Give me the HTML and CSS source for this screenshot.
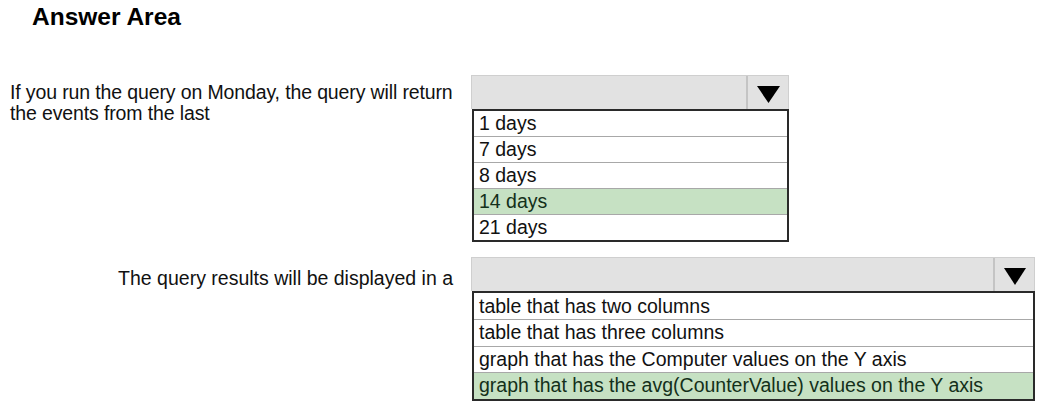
FILE: index.html
```html
<!DOCTYPE html>
<html lang="en">
<head>
<meta charset="utf-8">
<title>Answer Area</title>
<link rel="stylesheet" href="styles.css">
</head>
<body>
<div class="page">
  <h1 class="title">Answer Area</h1>

  <div class="question q-first">
    <div class="label label-left">If you run the query on Monday, the query will return<br>the events from the last</div>
    <div class="dropdown dd-short">
      <div class="dd-head">
        <div class="dd-field"></div>
        <div class="dd-btn">
          <svg class="tri" width="23" height="17" viewBox="0 0 23 17"><polygon points="0,0 23,0 11.5,17" fill="#000"/></svg>
        </div>
      </div>
      <ul class="dd-list rows-26">
        <li>1 days</li>
        <li>7 days</li>
        <li>8 days</li>
        <li class="selected">14 days</li>
        <li>21 days</li>
      </ul>
    </div>
  </div>

  <div class="question q-second">
    <div class="label label-right">The query results will be displayed in a</div>
    <div class="dropdown dd-long">
      <div class="dd-head">
        <div class="dd-field"></div>
        <div class="dd-btn dd-btn-narrow">
          <svg class="tri" width="22" height="17" viewBox="0 0 22 17"><polygon points="0,0 22,0 11,17" fill="#000"/></svg>
        </div>
      </div>
      <ul class="dd-list rows-27">
        <li>table that has two columns</li>
        <li>table that has three columns</li>
        <li>graph that has the Computer values on the Y axis</li>
        <li class="selected">graph that has the avg(CounterValue) values on the Y axis</li>
      </ul>
    </div>
  </div>
</div>
</body>
</html>
```

FILE: styles.css
```css
html, body {
  margin: 0;
  padding: 0;
  background: #ffffff;
}

body {
  font-family: "Liberation Sans", Arial, sans-serif;
  color: #111111;
}

.page {
  width: 1044px;
  height: 411px;
  overflow: hidden;
}

.title {
  margin: 3px 0 0 32px;
  font-size: 24.5px;
  line-height: 28px;
  font-weight: bold;
  color: #000;
}

.question {
  display: flex;
  align-items: flex-start;
  gap: 10px;
}

.q-first {
  margin-top: 44px;
}

.q-second {
  margin-top: 15px;
}

.label {
  width: 451px;
  margin-left: 10px;
  font-size: 19.5px;
  line-height: 21px;
  white-space: nowrap;
}

.label-left {
  padding-top: 7px;
  text-align: left;
  letter-spacing: -0.13px;
}

.label-right {
  padding-top: 11px;
  padding-right: 8px;
  box-sizing: border-box;
  text-align: right;
}

.dropdown {
  display: flex;
  flex-direction: column;
}

.dd-short {
  width: 318px;
}

.dd-long {
  width: 564px;
}

.dd-head {
  display: flex;
  height: 34px;
  box-sizing: border-box;
  background: #e2e2e2;
  border: 1px solid #cfcfcf;
  border-bottom: none;
}

.dd-field {
  flex: 1;
}

.dd-btn {
  width: 42px;
  border-left: 2px solid #c4c4c4;
  display: flex;
  align-items: center;
  justify-content: center;
  padding-top: 4px;
  box-sizing: border-box;
}

.dd-btn-narrow {
  width: 41px;
}

.tri {
  display: block;
}

.dd-list {
  list-style: none;
  margin: 0 0 0 1px;
  padding: 0;
  border: 2px solid #2a2a2a;
  background: #fff;
}

.dd-list li {
  box-sizing: border-box;
  font-size: 19.5px;
  padding: 0 0 0 5px;
  border-top: 1px solid #a8a8a8;
  color: #111;
  white-space: nowrap;
}

.dd-list li:first-child {
  border-top: none;
}

.rows-26 li {
  height: 26px;
  line-height: 25px;
}

.rows-26 li:first-child {
  height: 25px;
}

.rows-27 li {
  height: 26.5px;
  line-height: 25.5px;
}

.rows-27 li:first-child {
  height: 26px;
  line-height: 26px;
}

.dd-list li.selected {
  background: #c6e1c3;
  color: #14301a;
}
```
